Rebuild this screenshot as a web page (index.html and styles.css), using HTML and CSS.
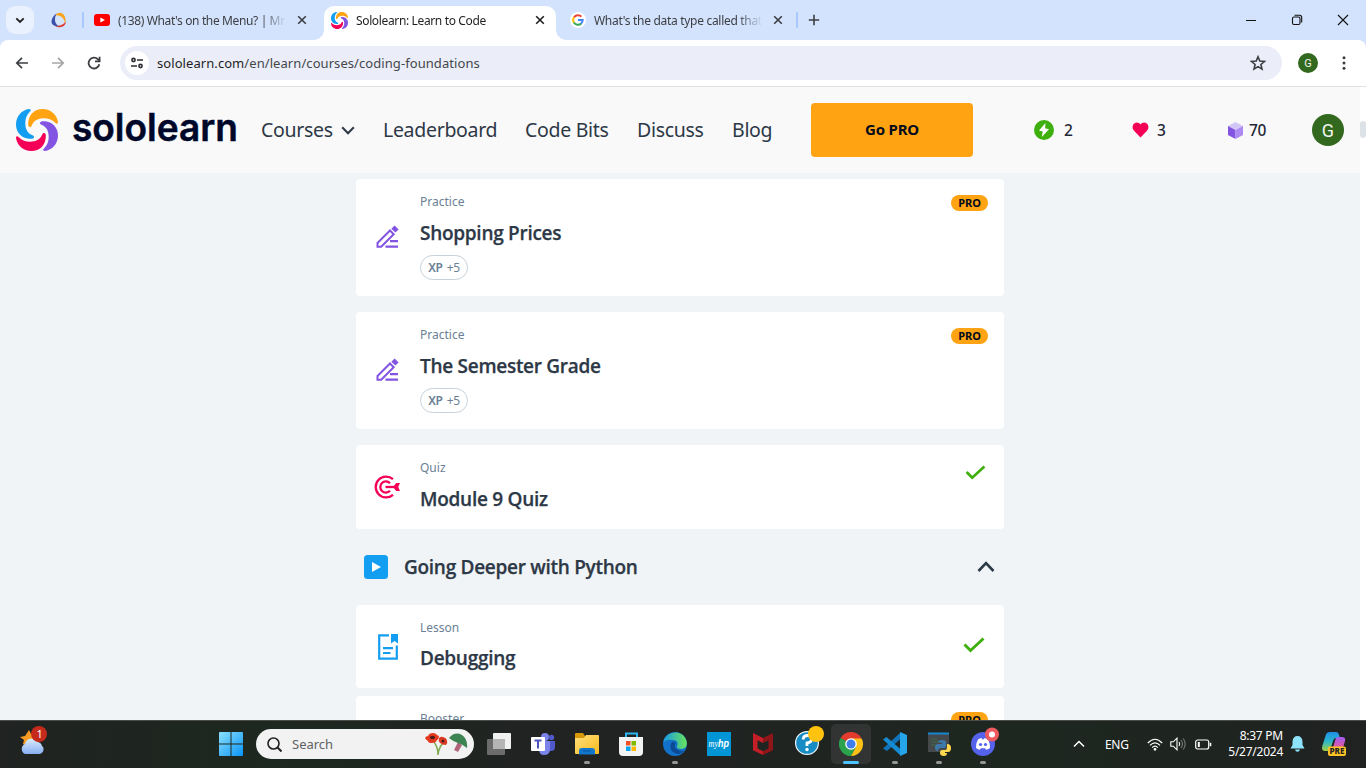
FILE: index.html
```
<!DOCTYPE html>
<html lang="en">
<head>
<meta charset="utf-8">
<title>Sololearn: Learn to Code</title>
<link rel="stylesheet" href="styles.css">
</head>
<body>
<svg class="defs" width="0" height="0">
  <defs>
    <path id="blade" d="M14 18C12 18 12 15 12.3 13C13 6 18 0 26.5 0C35 0 41 6 42 13C42 15 40.5 15.3 39.5 14C36 10.5 32 9.3 28 9.3C22 9.3 18 11.5 16 16C15.4 17.4 15 18 14 18Z"/>
    <symbol id="logo" viewBox="0 0 42 42">
      <use href="#blade" fill="#ffa312"/>
      <use href="#blade" fill="#149ef2" transform="rotate(-90 21 21)"/>
      <use href="#blade" fill="#f50057" transform="rotate(180 21 21)"/>
      <use href="#blade" fill="#8353e2" transform="rotate(90 21 21)"/>
    </symbol>
    <symbol id="x" viewBox="0 0 10 10"><path d="M1.2 1.2l7.6 7.6M8.8 1.2L1.2 8.8" stroke="currentColor" stroke-width="1.6"/></symbol>
    <symbol id="pencil" viewBox="0 0 24 24">
      <path d="M1.5 21.800V18L14 5.500l3.700 3.700L5.200 21.800z" fill="none" stroke="#8353e2" stroke-width="2"/>
      <path d="M15.300 3.700L18.600.4l4 4-3.200 3.200z" fill="#8353e2"/>
      <path d="M14 16.200h8M9.500 21.600H22" stroke="#8353e2" stroke-width="2.200"/>
    </symbol>
    <symbol id="check" viewBox="0 0 22 16"><path d="M1.500 7.500l6 6L20.500 1.500" fill="none" stroke="#3faf0e" stroke-width="2.900"/></symbol>
    <linearGradient id="win" gradientUnits="userSpaceOnUse" x1="0" y1="0" x2="24" y2="24"><stop offset="0" stop-color="#8be0fd"/><stop offset="1" stop-color="#0a94f6"/></linearGradient>
    <linearGradient id="edge" x1="0" y1="0" x2="1" y2="0"><stop offset="0" stop-color="#1b9de2"/><stop offset="1" stop-color="#67e35a"/></linearGradient>
    <linearGradient id="folder" x1="0" y1="0" x2="1" y2="1"><stop offset="0" stop-color="#ffe07c"/><stop offset="1" stop-color="#f9b91e"/></linearGradient>
    <linearGradient id="cloud" x1="0" y1="0" x2="0" y2="1"><stop offset="0" stop-color="#dcebff"/><stop offset="1" stop-color="#86aef0"/></linearGradient>
    <linearGradient id="pilotA" x1="0" y1="0" x2="0" y2="1"><stop offset="0" stop-color="#1f8fe8"/><stop offset=".5" stop-color="#2bb6c9"/><stop offset="1" stop-color="#a6cf3c"/></linearGradient>
    <linearGradient id="pilotB" x1="0" y1="0" x2="0" y2="1"><stop offset="0" stop-color="#a05cf0"/><stop offset=".6" stop-color="#e3589d"/><stop offset="1" stop-color="#f8863f"/></linearGradient>
  </defs>
</svg>

<div class="screen">
  <div class="tabstrip">
    <button class="tabsearch"><svg width="10" height="7" viewBox="0 0 10 7"><path d="M1.3 1.3L5 5l3.7-3.7" fill="none" stroke="#1f1f1f" stroke-width="1.8"/></svg></button>
    <svg class="pinned" width="16" height="16" viewBox="0 0 16 16">
      <path d="M4.500 3.200C6-.2 12-.5 14 5c.8 2.300.8 4.500 0 6.500C13.600 6.500 10 3 4.500 3.200z" fill="#f9a51a"/>
      <path d="M14.700 9.500c.2 3.500-3 6.500-8 5.500-1.500-.3-3-.9-4-1.800 4.500 1.300 9 .300 12-3.700z" fill="#de3b34"/>
      <path d="M5.500 1.500C1.500 4.500-.5 8.500 1 11.800c1 1.700 3.500 2.700 6.500 2.400C3.500 11.500 3 7 5.500 1.500z" fill="#3b4fa8"/>
    </svg>
    <i class="sep"></i>
    <div class="tab tab-first">
      <svg width="16" height="12" viewBox="0 0 16 12"><rect width="16" height="12" rx="3" fill="#f00"/><path d="M6.300 3.400v5.200L11 6z" fill="#fff"/></svg>
      <span class="tab-title">(138) What's on the Menu? | Mr</span>
      <svg class="close" width="10" height="10"><use href="#x"/></svg>
    </div>
    <div class="tab active">
      <svg width="17" height="17"><use href="#logo"/></svg>
      <span class="tab-title">Sololearn: Learn to Code</span>
      <svg class="close" width="10" height="10"><use href="#x"/></svg>
    </div>
    <div class="tab tab-last">
      <svg width="16" height="16" viewBox="0 0 16 16" fill="none" stroke-width="2"><circle cx="8" cy="8" r="8" fill="#fff"/><path d="M4 5.400A4.800 4.800 0 0 1 11.400 4.600" stroke="#ea4335"/><path d="M4 5.300a5 5 0 0 0 0 5.400" stroke="#fbbc05"/><path d="M3.900 10.500a4.800 4.800 0 0 0 7.300 1" stroke="#34a853"/><path d="M8 8.100h4.700q0 2.200-1.700 3.600" stroke="#4285f4"/></svg>
      <span class="tab-title">What's the data type called that</span>
      <svg class="close" width="10" height="10"><use href="#x"/></svg>
    </div>
    <i class="sep"></i>
    <svg class="plus" width="12" height="12" viewBox="0 0 12 12"><path d="M6 .8v10.400M.8 6h10.400" stroke="#3c3e42" stroke-width="1.6"/></svg>
    <div class="winctl">
      <svg width="12" height="12" viewBox="0 0 12 12"><path d="M1 6.500h10" stroke="#111"/></svg>
      <svg width="12" height="12" viewBox="0 0 12 12" fill="none" stroke="#111" stroke-width="1.100"><rect x="1.500" y="3" width="7.500" height="7.500" rx="1.500"/><path d="M3.500 1.300H8.500a2.200 2.200 0 0 1 2.200 2.200v5"/></svg>
      <svg width="12" height="12" viewBox="0 0 12 12"><path d="M1 1l10 10M11 1L1 11" stroke="#111" stroke-width="1.100"/></svg>
    </div>
  </div>

  <div class="toolbar">
    <svg width="14" height="14" viewBox="0 0 14 14" fill="none" stroke="#3c3e42" stroke-width="1.700"><path d="M13 7H2M7 1.800L1.800 7 7 12.200"/></svg>
    <svg width="14" height="14" viewBox="0 0 14 14" fill="none" stroke="#a5a6a8" stroke-width="1.700"><path d="M1 7h11M7 1.800L12.200 7 7 12.200"/></svg>
    <svg width="14" height="14" viewBox="0 0 14 14" fill="none" stroke="#3c3e42" stroke-width="1.800"><path d="M12.300 8.200A5.400 5.400 0 1 1 11 3.400L12.500 5"/><path d="M12.600 .8v4.600H8"/></svg>
    <div class="omnibox">
      <span class="site"><svg width="12" height="12" viewBox="0 0 12 12" fill="none" stroke="#2b2d31" stroke-width="1.600"><circle cx="2.500" cy="3" r="1.600"/><path d="M6 3h6M0 9h6"/><circle cx="9.500" cy="9" r="1.600"/></svg></span>
      <span class="url"><b>sololearn.com</b>/en/learn/courses/coding-foundations</span>
      <svg width="16" height="16" viewBox="0 0 16 16"><path d="M8 1.800l1.800 4.300 4.700.4-3.600 3 1.100 4.600-4-2.500-4 2.500 1.100-4.600-3.600-3 4.700-.4z" fill="none" stroke="#3c3e42" stroke-width="1.600"/></svg>
    </div>
    <span class="avatar small">G</span>
    <svg width="4" height="14" viewBox="0 0 4 14" fill="#3c3e42"><circle cx="2" cy="1.800" r="1.500"/><circle cx="2" cy="7" r="1.500"/><circle cx="2" cy="12.200" r="1.500"/></svg>
  </div>

  <div class="page">
    <div class="content">
      <header class="header">
        <svg class="brand" width="224" height="50" viewBox="0 0 224 50">
          <use href="#logo" width="42" height="42" y="4"/>
          <text x="56" y="35.500" textLength="166" lengthAdjust="spacingAndGlyphs">sololearn</text>
        </svg>
        <nav class="nav">
          <a>Courses<svg width="14" height="9" viewBox="0 0 14 9"><path d="M1.200 1.300L7 7.300l5.800-6" fill="none" stroke="#2d3846" stroke-width="2"/></svg></a>
          <a>Leaderboard</a><a>Code Bits</a><a>Discuss</a><a>Blog</a>
        </nav>
        <button class="gopro">Go PRO</button>
        <div class="stats">
          <span class="streak"><svg width="20" height="20" viewBox="0 0 20 20"><circle cx="10" cy="10" r="10" fill="#3faf0e"/><path d="M11.500 3L5 10.400l3.700 1-.9 5.600L15 9.200l-3.900-1z" fill="#fff"/></svg>2</span>
          <span class="hearts"><svg width="17" height="16" viewBox="0 0 17 16"><path d="M8.500 15.500L2 8.700C-.8 5.700.7.600 4.700.5 6.500.5 7.700 1.300 8.500 2.500 9.300 1.300 10.500.5 12.300.5c4 .1 5.500 5.200 2.700 8.200z" fill="#f50057"/></svg>3</span>
          <span class="gems"><svg width="15" height="17" viewBox="0 0 15 17"><path d="M7.500 0L15 4 7.500 8 0 4z" fill="#d2c7f6"/><path d="M0 4l7.500 4v9L0 13z" fill="#8353e2"/><path d="M15 4L7.500 8v9L15 13z" fill="#ad89f4"/></svg>70</span>
        </div>
        <span class="avatar">G</span>
      </header>

      <main class="lessons">
        <article class="card">
          <div class="icon"><svg width="24" height="24"><use href="#pencil"/></svg></div>
          <div class="info"><p class="kind">Practice</p><h3>Shopping Prices</h3><span class="xp"><b>XP</b> +5</span></div>
          <span class="pro">PRO</span>
        </article>
        <article class="card">
          <div class="icon"><svg width="24" height="24"><use href="#pencil"/></svg></div>
          <div class="info"><p class="kind">Practice</p><h3>The Semester Grade</h3><span class="xp"><b>XP</b> +5</span></div>
          <span class="pro">PRO</span>
        </article>
        <article class="card quiz">
          <div class="icon"><svg width="26" height="24" viewBox="0 0 26 24" fill="none" stroke="#f50057" stroke-width="2.300"><path d="M19 4.200A10.400 10.400 0 1 0 19 19.800"/><path d="M16 8.200a5.600 5.600 0 1 0 0 7.600"/><path d="M11.500 12H21"/><path d="M19 12l3.200-4H26l-1.800 4 1.800 4h-3.800z" fill="#f50057" stroke="none"/></svg></div>
          <div class="info"><p class="kind">Quiz</p><h3>Module 9 Quiz</h3></div>
          <svg class="done" width="21" height="15"><use href="#check"/></svg>
        </article>
        <div class="section">
          <svg width="24" height="24" viewBox="0 0 24 24"><rect width="24" height="24" rx="3.500" fill="#149ef2"/><path d="M8 7v10l9-5z" fill="#fff"/></svg>
          <h3>Going Deeper with Python</h3>
          <svg width="18" height="12" viewBox="0 0 18 12"><path d="M1.500 10L9 2.200l7.500 7.800" fill="none" stroke="#2d3846" stroke-width="2.600"/></svg>
        </div>
        <article class="card lesson">
          <div class="icon"><svg width="20" height="26" viewBox="0 0 20 26" fill="none" stroke="#149ef2" stroke-width="2.200"><path d="M11 1.300H1.200v23.400h17.600V11.500"/><path d="M5 14.100h10M5 19h7.500"/><path d="M13 0h7v9.600L16.500 7 13 9.600z" fill="#149ef2" stroke="none"/></svg></div>
          <div class="info"><p class="kind">Lesson</p><h3>Debugging</h3></div>
          <svg class="done" width="22" height="16"><use href="#check"/></svg>
        </article>
        <article class="card booster">
          <div class="icon"></div>
          <div class="info"><p class="kind">Booster</p></div>
          <span class="pro">PRO</span>
        </article>
      </main>
    </div>
    <div class="scrollbar"><i></i></div>
  </div>

  <footer class="taskbar">
    <svg class="weather" width="30" height="32" viewBox="0 0 30 32">
      <path d="M10 4l2 4 5 0 2 8-10 4-5-2 1-4-4-3 5-1z" fill="#f59a22"/>
      <path d="M6 28a5.500 5.500 0 0 1 0-10 6.500 6.500 0 0 1 12-2 5.500 5.500 0 0 1 5 4q2 1 1.500 4t-4 4z" fill="url(#cloud)"/>
      <circle cx="20" cy="8" r="8" fill="#c42b1c"/><text x="17.500" y="12">1</text>
    </svg>
    <div class="apps">
      <svg class="start" width="24" height="24" viewBox="0 0 24 24" fill="url(#win)"><path d="M0 1q0-1 1-1h10.500v11.500H0zM12.500 0H23q1 0 1 1v10.500H12.500zM0 12.500h11.500V24H1q-1 0-1-1zM12.500 12.500H24V23q0 1-1 1H12.500z"/></svg>
      <div class="search">
        <svg width="15" height="15" viewBox="0 0 15 15" fill="none" stroke="#222" stroke-width="1.600"><circle cx="6.500" cy="6.500" r="5.500"/><path d="M10.500 10.500l4 4" stroke-width="2"/></svg>
        <span>Search</span>
        <svg width="43" height="24" viewBox="0 0 43 24"><path d="M8 9q5 5 5 14M20 10q-6 3-7 13" fill="none" stroke="#77a84a" stroke-width="1.400"/><path d="M0 6q1-2 3-2 1-3 5-3 3 0 4 2l2 1q0 3-2 4-1 3-5 3-4 0-4-2-2-1-3-3z" fill="#e5391f"/><ellipse cx="7.500" cy="5.500" rx="2.600" ry="1.700" fill="#4a1c18"/><path d="M14 6q2-2 4-1 4 1 4 4 1 2-1 4-4 0-6-2-2-2-1-5z" fill="#dc3a24"/><circle cx="18" cy="9" r="1.500" fill="#4a1c18"/><path d="M33 10l4 3-4 7-4-2z" fill="#b0657b"/><path d="M24 6Q30-1 37 3q6 4 5 13-5-4-9-5T24 6z" fill="#3d8452"/></svg>
      </div>
      <span class="app"><svg width="24" height="24" viewBox="0 0 24 24"><rect x="6" y="1" width="18" height="16" rx="1" fill="#f1f1f1"/><rect y="7" width="18" height="16" rx="1" fill="#7e7e7e" fill-opacity=".8"/><path d="M6 7h12v10H6z" fill="#b5b5b5"/></svg></span>
      <span class="app"><svg width="24" height="24" viewBox="0 0 24 24"><circle cx="14" cy="5" r="4" fill="#7b83eb"/><circle cx="20.500" cy="5.500" r="2.700" fill="#5059c9"/><path d="M15 9h9v6q0 4-4 4h-5z" fill="#5059c9"/><path d="M8 9h11v8q0 6-6 6-5 0-5-6z" fill="#7b83eb"/><rect y="5" width="14" height="14" rx="1" fill="#fff"/><path d="M3.500 8.500h7M7 8.500v8" stroke="#4b53bc" stroke-width="2"/></svg></span>
      <span class="app run"><svg width="24" height="24" viewBox="0 0 24 24"><path d="M0 2q0-1 1-1h7l2 3h13v5H0z" fill="#d89a0b"/><path d="M0 6h9l2-3h12q1 0 1 1v17q0 1-1 1H1q-1 0-1-1z" fill="url(#folder)"/><path d="M4 22.500v-3.500q0-3 3-3h10q3 0 3 3v3.500z" fill="#1277cc"/><path d="M8 19h8" stroke="#07549d"/></svg></span>
      <span class="app"><svg width="24" height="24" viewBox="0 0 24 24"><path d="M7 7V1.500h11V7" fill="none" stroke="#2bb5ef" stroke-width="2"/><path d="M0 5h24v15q0 4-4 4H4q-4 0-4-4z" fill="#f3f3f3"/><path fill="#f25022" d="M7 9h4.500v4.500H7z"/><path fill="#7fba00" d="M12.500 9H17v4.500h-4.500z"/><path fill="#00a4ef" d="M7 14.500h4.500V19H7z"/><path fill="#ffb900" d="M12.500 14.500H17V19h-4.500z"/></svg></span>
      <span class="app run"><svg width="24" height="24" viewBox="0 0 24 24"><circle cx="12" cy="12" r="12" fill="#1271c8"/><path d="M.5 10C2-1 20-4 23.500 9q1.500 7-5 8-6 0-4-4 1-5-5-5Q4 7 .5 10z" fill="url(#edge)"/><path d="M10 9.500c-4 2-4 11 4.500 12.500q4 0 7-3.500-4 1.500-6.500-.5Q10 15 12.500 11.500q0-1-2.500-2z" fill="#0c4a96"/></svg></span>
      <span class="app"><svg width="24" height="24" viewBox="0 0 24 24"><rect width="24" height="24" fill="#0096d6"/><text class="hp" x="1.500" y="15" textLength="20.500" lengthAdjust="spacingAndGlyphs">my<tspan>hp</tspan></text></svg></span>
      <span class="app"><svg width="20" height="24" viewBox="0 0 22 24"><path d="M0 0l11 5.500V11L5 8v9l6 3v4L0 19z" fill="#c41f26"/><path d="M22 0L11 5.500V11l6-3v9l-6 3v4l11-5z" fill="#8e1518"/></svg></span>
      <span class="app"><svg class="help" width="30" height="30" viewBox="0 0 30 30"><circle cx="12" cy="17" r="11.400" fill="#168bc4" stroke="#eef6fa" stroke-width="1.200"/><path d="M8 13.500q.5-4 4.500-4t4 3.500-4.500 4V20" fill="none" stroke="#fff" stroke-width="2.800"/><circle cx="12" cy="23.500" r="1.700" fill="#fff"/><circle cx="21" cy="8" r="8" fill="#ffc20e"/></svg></span>
      <span class="app current"><svg width="24" height="24" viewBox="0 0 24 24"><path d="M12 12L1.600 6a12 12 0 0 1 20.800 0z" fill="#e33b2e"/><path d="M12 12L1.600 6A12 12 0 0 0 12 24l5.200-9z" fill="#2ba24c"/><path d="M12 6.500h10.700A12 12 0 0 1 12 24l5-9z" fill="#fbc116"/><circle cx="12" cy="12" r="5.800" fill="#fff"/><circle cx="12" cy="12" r="4.500" fill="#3f7ee8"/></svg></span>
      <span class="app run"><svg width="24" height="24" viewBox="0 0 24 24"><path d="M17 1L18 6.500 4 19 0 16.500z" fill="#1173b8"/><path d="M0 7.500L3.500 5 18 17.500 17 23z" fill="#168bd1"/><path d="M17 0l7 3v18l-7 3z" fill="#27a5ea"/></svg></span>
      <span class="app run"><svg width="24" height="24" viewBox="0 0 24 24"><rect x="1" y="1" width="21" height="19" fill="#45494b"/><path d="M1 1.500h21" stroke="#1687d0" stroke-width="2"/><path d="M4 7h6M4 10h8M4 13h5" stroke="#3d7147" stroke-width="1.200"/><path d="M11 10q0-2 4-2t4 2v4q0 2-2 2h-4q-2 0-2 3-3 0-3-3.500T11 12h4v-1z" fill="#3c78aa"/><path d="M20 12q4 0 4 4t-3 4h-3v1h2q0 3-3 3-4 0-4-3t2-3h3q2 0 2-2z" fill="#ffd94d"/></svg></span>
      <span class="app run"><svg class="discord" width="28" height="30" viewBox="0 0 28 30"><circle cx="12" cy="18" r="12" fill="#5562ec"/><path d="M5 22q0-6 2.500-9l3-1 .6 1.200h1.800l.6-1.200 3 1q2.500 3 2.500 9-2 1.700-4 1.700l-.8-1.500H9.800L9 23.700q-2 0-4-1.700z" fill="#fff"/><circle cx="9.500" cy="18.500" r="1.600" fill="#5562ec"/><circle cx="14.500" cy="18.500" r="1.600" fill="#5562ec"/><circle cx="21" cy="8.500" r="7" fill="#ed5a60"/><circle cx="21" cy="8.500" r="3" fill="#fff"/></svg></span>
    </div>
    <div class="tray">
      <svg class="up" width="12" height="8" viewBox="0 0 12 8"><path d="M1 6.500l5-5 5 5" fill="none" stroke="#fff" stroke-width="1.500"/></svg>
      <span class="lang">ENG</span>
      <svg class="wifi" width="16" height="13" viewBox="0 0 16 13" fill="none" stroke="#fff" stroke-width="1.200"><path d="M.8 5q7.200-7.500 14.400 0M3 7.400q5-5 10 0M5.200 9.600q2.800-2.800 5.600 0"/><circle cx="8" cy="11.300" r=".8" fill="#fff"/></svg>
      <svg class="vol" width="16" height="14" viewBox="0 0 16 14" fill="none" stroke="#fff" stroke-width="1.100"><path d="M.8 4.800h2.500L7 1.200v11.600L3.300 9.200H.8z"/><path d="M9 5q1.500 2 0 4"/><path d="M11 3q3 4 0 8M13.200 1.500q4 5.500 0 11" stroke="#777"/></svg>
      <svg class="batt" width="17" height="11" viewBox="0 0 17 11" fill="none" stroke="#fff" stroke-width="1.200"><rect x=".7" y="1" width="13" height="9" rx="2"/><path d="M15.500 3.800v3.400" stroke-width="1.600"/><path d="M2.800 3v5h2V3z" fill="#fff" stroke="none"/></svg>
      <div class="clock"><span>8:37 PM</span><span>5/27/2024</span></div>
      <svg class="bell" width="15" height="16" viewBox="0 0 15 16" fill="#8ce3fb"><path d="M2.500 5.500Q3 0 7.500 0t5 5.500V9L14.500 12.500H.5L2.500 9zM5 13.500h5q-.5 2.300-2.500 2.300T5 13.500z"/></svg>
      <svg class="copilot" width="25" height="24" viewBox="0 0 25 24"><path d="M14 0q2 0 2.700 2l1.300 4h-4q-2 0-2.800 2.500L8.500 17q-.6 2-3 2H3q-4 0-2.700-5L3.800 3Q4.700 0 8 0z" fill="url(#pilotA)"/><path d="M16 5h4q4 0 3 4l-3 10q-1 4-4 4h-5q-2.500 0-3.500-3 2 0 2.700-2l3-10q.7-3 2.800-3z" fill="url(#pilotB)"/><rect x="6" y="14.500" width="18" height="9.500" rx="2" fill="#ffc328"/><text x="7.500" y="22.200" textLength="15" lengthAdjust="spacingAndGlyphs">PRE</text></svg>
    </div>
  </footer>
</div>
</body>
</html>
```
FILE: styles.css
```
* { box-sizing: border-box; }
body { margin: 0; overflow: hidden; font-family: "Noto Sans", "Open Sans", sans-serif; }
p, h3 { margin: 0; }
button { border: 0; padding: 0; font-family: inherit; }
svg { display: block; flex: none; }
.defs { position: absolute; }
.screen { display: flex; flex-direction: column; width: 1366px; height: 768px; background: #d3e3fd; overflow: hidden; }

/* Browser tabs */
.tabstrip { display: flex; align-items: center; height: 40px; flex: none; padding-left: 6px; color: #3c3e42; }
.tabsearch { display: grid; place-items: center; width: 28px; height: 28px; border-radius: 9px; background: #eaf1fe; }
.pinned { margin: 0 15px 0 17px; }
.sep { width: 2px; height: 16px; background: #a8c7fa; border-radius: 1px; flex: none; }
.tab { display: flex; align-items: center; height: 34px; margin-top: 6px; padding-bottom: 6px; }
.tab-first { width: 240px; padding-left: 10px; }
.tab-title { flex: none; margin-left: 8px; width: 167px; font-size: 12px; letter-spacing: -.37px; white-space: nowrap; overflow: hidden; -webkit-mask-image: linear-gradient(90deg, #000 86%, transparent 101%); }
.close { margin-left: 12px; }
.active { position: relative; width: 232px; padding-left: 7px; background: #fff; border-radius: 10px 10px 0 0; color: #1f1f1f; }
.active .tab-title { width: 171px; letter-spacing: -.36px; }
.active .close { margin-left: 8px; }
.active::before, .active::after { content: ""; position: absolute; bottom: 0; width: 10px; height: 10px; }
.active::before { left: -10px; background: radial-gradient(circle at 0 0, transparent 9.5px, #fff 10px); }
.active::after { right: -10px; background: radial-gradient(circle at 100% 0, transparent 9.5px, #fff 10px); }
.tab-last { width: 240px; padding-left: 14px; }
.tab-last .tab-title { letter-spacing: -.3px; }
.plus { margin-left: 10px; }
.winctl { display: flex; gap: 34px; margin-left: auto; padding-right: 17px; }

/* Address bar */
.toolbar { display: flex; align-items: center; flex: none; height: 47px; padding: 0 20px 0 15px; background: #fff; border-bottom: 1px solid #dedfe1; border-radius: 8px 8px 0 0; }
.toolbar > svg:nth-child(2), .toolbar > svg:nth-child(3) { margin-left: 22px; }
.omnibox { display: flex; align-items: center; width: 1162px; height: 34px; margin-left: 19px; padding: 0 16px 0 5px; border-radius: 17px; background: #ebeef8; }
.site { display: grid; place-items: center; width: 24px; height: 24px; border-radius: 50%; background: #fff; }
.url { flex: 1; margin-left: 8px; font-size: 13px; letter-spacing: .07px; color: #44474c; }
.url b { font-weight: 400; color: #1f1f1f; }
.avatar { display: grid; place-items: center; width: 32px; height: 32px; border-radius: 50%; background: #33691e; color: #f2f5ef; font: 400 18px Roboto, sans-serif; }
.avatar.small { width: 20px; height: 20px; margin: 0 24px 0 16px; flex: none; font-size: 11px; }

/* Site header */
.page { display: flex; height: 633px; background: #fff; overflow: hidden; }
.content { width: 1360px; background: #f0f4f7; }
.header { display: flex; align-items: center; height: 86px; padding-left: 16px; background: #f9f9f9; }
.brand text { font: 600 38px Inter, sans-serif; fill: #00082a; stroke: #00082a; stroke-width: .5px; }
.nav { display: grid; grid-template-columns: 122px 142px 112px 95px 79px; margin: 0 0 2px 21px; font-size: 19.5px; letter-spacing: -.3px; color: #2d3846; }
.nav a { display: flex; align-items: center; white-space: nowrap; }
.nav a svg { margin: 3px 0 0 8px; }
.gopro { width: 162px; height: 54px; padding-bottom: 2px; border-radius: 4px; background: #ffa312; color: #000a1c; font-size: 15px; font-weight: 700; letter-spacing: -.2px; }
.stats { display: grid; grid-template-columns: 98px 96px 84px; margin-left: 61px; color: #1f2836; font-size: 15.5px; font-weight: 500; letter-spacing: -.4px; }
.stats span { display: flex; align-items: center; }
.streak svg { margin-right: 10px; }
.hearts svg { margin-right: 8px; }
.gems svg { margin: 0 6px 0 0; }

/* Course list */
.lessons { width: 648px; margin-left: 356px; padding-top: 6px; color: #2d3846; }
.card { display: flex; align-items: flex-start; height: 117px; margin-bottom: 16px; padding: 14px 16px 0 0; border-radius: 4px; background: #fff; }
.icon { display: flex; justify-content: center; width: 64px; padding-top: 32px; }
.info { flex: 1; }
.kind { height: 26px; line-height: 18px; font-size: 12px; color: #6b7f95; }
.lessons h3 { font: 600 19px/28px "Open Sans", sans-serif; letter-spacing: -.28px; -webkit-text-stroke: .25px #2d3846; }
.xp { display: flex; align-items: center; justify-content: center; gap: 4px; width: 48px; height: 25px; margin-top: 8px; padding-bottom: 1px; border: 1px solid #c8d2db; border-radius: 13px; font-size: 12px; letter-spacing: -.3px; color: #6b7f95; }
.xp b { font-weight: 600; }
.pro { width: 37px; height: 16px; margin-top: 2px; border-radius: 8px; background: #ffa312; color: #000a1c; font-size: 11px; font-weight: 700; line-height: 16px; text-align: center; }
.quiz { height: 84px; margin-bottom: 0; }
.quiz .icon { padding: 16px 2px 0 0; }
.done { margin-top: 6px; margin-right: 2px; }
.section { display: flex; align-items: center; height: 76px; padding: 0 9px 0 8px; }
.section h3 { flex: 1; margin-left: 16px; }
.lesson { height: 83px; margin-bottom: 8px; }
.lesson .icon { padding-top: 15px; }
.lesson .kind { height: 25px; }
.lesson .done { margin-top: 18px; margin-right: 3px; }

/* Taskbar */
.taskbar { display: flex; align-items: center; flex: none; height: 48px; padding-bottom: 1px; border-top: 1px solid #4a4d4b; background: linear-gradient(90deg, #202321, #1d2820 20%, #212322 40%, #202421 60%, #1d2720 75%, #202221); color: #fff; }
.weather { margin: -4px 0 0 19px; }
.weather text { font: 11px "Noto Sans", sans-serif; fill: #fff; }
.apps { display: flex; align-items: center; width: 786px; height: 46px; margin-left: 170px; }
.search { display: flex; align-items: center; width: 218px; height: 30px; margin: 0 3px 0 13px; padding: 0 6px 0 11px; border-radius: 15px; background: #f2f2f2; color: #5f6164; font-size: 13px; }
.search span { flex: 1; margin-left: 10px; }
.app { position: relative; display: grid; place-items: center; width: 44px; height: 40px; flex: none; }
.run::after, .current::after { content: ""; position: absolute; bottom: 0; left: 19px; width: 6px; height: 3px; border-radius: 2px; background: #969696; }
.current { background: #313432; border-radius: 5px; width: 40px; margin: 0 2px; }
.current::after { left: 12px; width: 16px; background: #4cc2ff; }
.hp { font: italic 10px "Liberation Serif", serif; fill: #fff; }
.hp tspan { font: italic 700 11px "Liberation Sans", sans-serif; }
.help { margin: -6px -6px 0 0; }
.discord { margin: -6px -4px 0 0; }
.tray { display: flex; align-items: center; margin-left: 68px; }
.lang { width: 26px; margin-left: 20px; font-size: 12px; letter-spacing: -.3px; }
.wifi { margin-left: 16px; }
.vol { margin-left: 7px; }
.batt { margin-left: 9px; }
.clock { display: flex; flex-direction: column; align-items: flex-end; width: 71px; font-size: 12px; line-height: 16px; letter-spacing: -.25px; }
.bell { margin-left: 7px; }
.copilot { margin-left: 17px; }
.copilot text { font: 800 8px "Noto Sans", sans-serif; fill: #222; }

.scrollbar { width: 6px; padding-top: 34px; }
.scrollbar i { display: block; height: 17px; border-radius: 3px; background: #dde2e7; }
```
